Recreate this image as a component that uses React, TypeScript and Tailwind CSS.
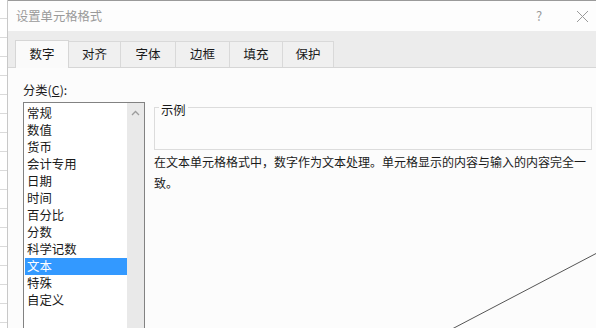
import React from "react";

const font = { fontFamily: '"Noto Sans CJK SC", "Noto Sans", sans-serif' };

const tabs = ["数字", "对齐", "字体", "边框", "填充", "保护"];
const tabWidths = [54, 52, 55, 54, 53, 51];
const items = ["常规", "数值", "货币", "会计专用", "日期", "时间", "百分比", "分数", "科学记数", "文本", "特殊", "自定义"];

export default function App() {
  return (
    <div className="relative w-[596px] h-[328px] overflow-hidden bg-white flex" style={font}>
      {/* spreadsheet strip */}
      <div className="w-[8px] shrink-0 h-full flex flex-col bg-white border-r border-[#c8c8c8]">
        {Array.from({ length: 18 }).map((_, i) => (
          <div key={i} className="h-[19px] shrink-0 border-b border-[#dadada]" />
        ))}
      </div>
      {/* dialog */}
      <div className="flex-1 min-w-0 h-full flex flex-col border-t border-[#9a9a9a] bg-[#fcfcfc]">
        <div className="h-[30px] shrink-0 bg-[#fdfdfd] flex items-center pl-[8px] text-[12.3px] text-[#9a9a9a]">
          <span>设置单元格格式</span>
          <span className="ml-auto text-[13px] text-[#9a9a9a] w-[10px] mr-[30px]">?</span>
          <svg width="13" height="13" viewBox="0 0 13 13" className="mr-[7px]">
            <path d="M1 1L12 12M12 1L1 12" stroke="#9a9a9a" strokeWidth="1" />
          </svg>
        </div>
        <div className="h-[37px] shrink-0 bg-[#ececec] border-b border-[#d6d6d6] flex items-end pl-[7px]">
          {tabs.map((t, i) => (
            <div
              key={t}
              style={{ width: tabWidths[i] }}
              className={
                i === 0
                  ? "h-[28px] bg-[#fafafa] border border-b-0 border-[#d6d6d6] flex items-center justify-center text-[12.5px] text-[#1a1a1a] -mb-px"
                  : "h-[26px] bg-[#f0f0f0] border border-l-0 border-b-0 border-[#d9d9d9] flex items-center justify-center text-[12.5px] text-[#1a1a1a]"
              }
            >
              {t}
            </div>
          ))}
        </div>
        <div className="flex-1 min-w-0 flex pl-[15px] pt-[12px]">
          <div className="w-[122px] shrink-0 flex flex-col">
            <div className="h-[21px] text-[12.3px] text-[#1a1a1a] leading-[21px]">
              分类(<span className="underline">C</span>):
            </div>
            <div className="flex-1 mt-[1px] border border-[#828282] border-b-0 bg-white flex">
              <div className="flex-1 flex flex-col pt-[2px] pl-[1px]">
                {items.map((it) => (
                  <div
                    key={it}
                    className={
                      it === "文本"
                        ? "h-[17px] leading-[17px] pl-[2px] text-[12.4px] bg-[#3399ff] text-white"
                        : "h-[17px] leading-[17px] pl-[2px] text-[12.4px] text-[#1a1a1a]"
                    }
                  >
                    {it}
                  </div>
                ))}
              </div>
              <div className="w-[17px] bg-[#e9e9e9] flex justify-center pt-[7px]">
                <svg width="9" height="6" viewBox="0 0 9 6">
                  <path d="M1 5L4.5 1.5L8 5" stroke="#9c9c9c" strokeWidth="1.3" fill="none" />
                </svg>
              </div>
            </div>
          </div>
          <div className="flex-1 min-w-0 pl-[9px] pr-[4px] pt-[27px]">
            <div className="relative h-[43px] border border-[#dcdcdc]">
              <span className="absolute -top-[6px] left-[4px] px-[2px] bg-[#fcfcfc] text-[12.3px] leading-[16px] text-[#1a1a1a]">
                示例
              </span>
            </div>
            <p className="mt-[1px] text-[12px] leading-[21px] text-[#1a1a1a] whitespace-nowrap">
              在文本单元格格式中，数字作为文本处理。单元格显示的内容与输入的内容完全一
              <br />
              致。
            </p>
          </div>
        </div>
      </div>
      <svg className="absolute inset-0 pointer-events-none" width="596" height="328">
        <line x1="597" y1="253" x2="452" y2="329" stroke="#555" strokeWidth="1" />
      </svg>
    </div>
  );
}
